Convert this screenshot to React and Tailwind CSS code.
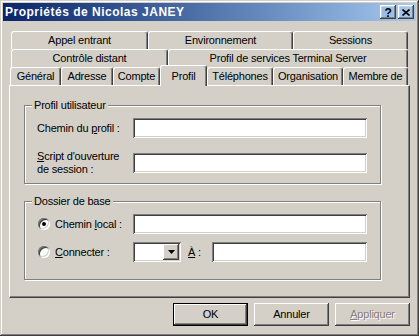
const raised = "shadow-[inset_-1px_-1px_0_#404040,inset_1px_1px_0_#ffffff,inset_-2px_-2px_0_#808080,inset_2px_2px_0_#d4d0c8]";
const sunken = "shadow-[inset_1px_1px_0_#808080,inset_-1px_-1px_0_#ffffff,inset_2px_2px_0_#404040,inset_-2px_-2px_0_#d4d0c8]";
const etched = "border border-[#808080] shadow-[1px_1px_0_#ffffff,inset_1px_1px_0_#ffffff]";
const tab = "h-[18px] flex items-center justify-center bg-[#d4d0c8] border-t border-l border-white border-r border-r-[#404040] rounded-t-[3px] shadow-[inset_-1px_0_0_#808080] pb-[1px]";

function Tab({ className, children }) {
    return <div className={`${tab} ${className}`}>{children}</div>;
}

function Radio({ checked }) {
    return (
        <span className="w-[12px] h-[12px] rounded-full bg-white flex items-center justify-center shadow-[inset_1px_1px_0_#808080,inset_-1px_-1px_0_#ffffff,inset_2px_2px_0_#404040,inset_-2px_-2px_0_#d4d0c8]">
            {checked && <span className="w-[4px] h-[4px] rounded-full bg-black"></span>}
        </span>
    );
}

function GroupBox({ title, children }) {
    return (
        <div className={`relative h-[79px] w-[357px] ${etched}`}>
            <span className="absolute -top-[7px] left-[7px] px-[2px] bg-[#d4d0c8] leading-[13px]">{title}</span>
            {children}
        </div>
    );
}

const Button = ({ children, isDefault, disabled }) => (
    <div className={`w-[75px] h-[23px] ${isDefault ? 'border border-black' : ''}`}>
        <div className={`h-full flex items-center justify-center ${raised} ${disabled ? 'text-[#808080] [text-shadow:1px_1px_0_#ffffff]' : ''}`}>
            {children}
        </div>
    </div>
);

export default function App() {
    return (
        <div className="w-[419px] h-[336px] bg-[#d4d0c8] p-[3px] text-[11px] tracking-[-0.2px] text-black font-['Liberation_Sans',Arial,sans-serif] shadow-[inset_-1px_-1px_0_#404040,inset_1px_1px_0_#d4d0c8,inset_-2px_-2px_0_#808080,inset_2px_2px_0_#ffffff] select-none">
            {/* caption */}
            <div className="h-[18px] flex items-center justify-between pl-[2px] pr-[2px] bg-linear-to-r from-[#0a246a] to-[#a6caf0]">
                <span className="text-white font-bold text-[12px] tracking-[0.5px]">Propriétés de Nicolas JANEY</span>
                <div className="flex gap-[2px]">
                    <div className={`w-[16px] h-[14px] flex items-center justify-center font-bold text-[12px] leading-none pt-[1px] ${raised}`}>?</div>
                    <div className={`w-[16px] h-[14px] flex items-center justify-center ${raised}`}>
                        <svg width="8" height="7" viewBox="0 0 8 7">
                            <path d="M0.5 0.5 L7.5 6.5 M7.5 0.5 L0.5 6.5" stroke="#000" strokeWidth="1.6" />
                        </svg>
                    </div>
                </div>
            </div>

            <div className="px-[6px] pt-[10px]">
                {/* tab rows */}
                <div className="flex ml-[2px]">
                    <Tab className="w-[137px]">Appel entrant</Tab>
                    <Tab className="w-[145px]">Environnement</Tab>
                    <Tab className="w-[115px]">Sessions</Tab>
                </div>
                <div className="flex ml-[2px]">
                    <Tab className="w-[157px]">Contrôle distant</Tab>
                    <Tab className="w-[240px]">Profil de services Terminal Server</Tab>
                </div>
                <div className="flex items-start h-[18px] ml-[1px]">
                    <Tab className="w-[51px]">Général</Tab>
                    <Tab className="w-[52px]">Adresse</Tab>
                    <Tab className="w-[47px]">Compte</Tab>
                    <div className="relative z-10 -mt-[2px] w-[47px] h-[21px] flex justify-center pt-[2px] bg-[#d4d0c8] border-t border-l border-white border-r border-r-[#404040] rounded-t-[3px] shadow-[inset_-1px_0_0_#808080]">Profil</div>
                    <Tab className="w-[66px]">Téléphones</Tab>
                    <Tab className="w-[70px]">Organisation</Tab>
                    <Tab className="w-[65px]">Membre de</Tab>
                </div>

                {/* panel */}
                <div className="h-[213px] border-t border-l border-white border-r border-b border-r-[#404040] border-b-[#404040] shadow-[inset_-1px_-1px_0_#808080] pl-[14px] pt-[19px]">
                    <GroupBox title="Profil utilisateur">
                        <div className="pt-[12px] pl-[12px] flex flex-col gap-[12px]">
                            <div className="flex items-center">
                                <span className="w-[96px]">Chemin du <span className="underline">p</span>rofil :</span>
                                <div className={`w-[234px] h-[20px] bg-white ${sunken}`}></div>
                            </div>
                            <div className="flex items-center">
                                <span className="w-[96px] leading-[13px]"><span className="underline">S</span>cript d'ouverture<br />de session :</span>
                                <div className={`w-[234px] h-[20px] bg-white ${sunken}`}></div>
                            </div>
                        </div>
                    </GroupBox>
                    <div className="h-[17px]"></div>
                    <GroupBox title="Dossier de base">
                        <div className="pt-[12px] pl-[13px] flex flex-col gap-[8px]">
                            <div className="flex items-center">
                                <Radio checked />
                                <span className="ml-[5px] w-[78px]">Chemin <span className="underline">l</span>ocal :</span>
                                <div className={`w-[234px] h-[20px] bg-white ${sunken}`}></div>
                            </div>
                            <div className="flex items-center">
                                <Radio />
                                <span className="ml-[5px] w-[78px]"><span className="underline">C</span>onnecter :</span>
                                <div className={`w-[48px] h-[20px] bg-white flex items-center justify-end pr-[2px] ${sunken}`}>
                                    <div className={`w-[16px] h-[16px] bg-[#d4d0c8] flex items-center justify-center ${raised}`}>
                                        <svg width="7" height="4" viewBox="0 0 7 4">
                                            <polygon points="0,0 7,0 3.5,4" fill="#000" />
                                        </svg>
                                    </div>
                                </div>
                                <span className="ml-[7px] w-[24px]"><span className="underline">À</span> :</span>
                                <div className={`w-[155px] h-[20px] bg-white ${sunken}`}></div>
                            </div>
                        </div>
                    </GroupBox>
                </div>

                {/* buttons */}
                <div className="flex justify-end gap-[6px] mt-[5px]">
                    <Button isDefault>OK</Button>
                    <Button>Annuler</Button>
                    <Button disabled><span><span className="underline">A</span>ppliquer</span></Button>
                </div>
            </div>
        </div>
    );
}
